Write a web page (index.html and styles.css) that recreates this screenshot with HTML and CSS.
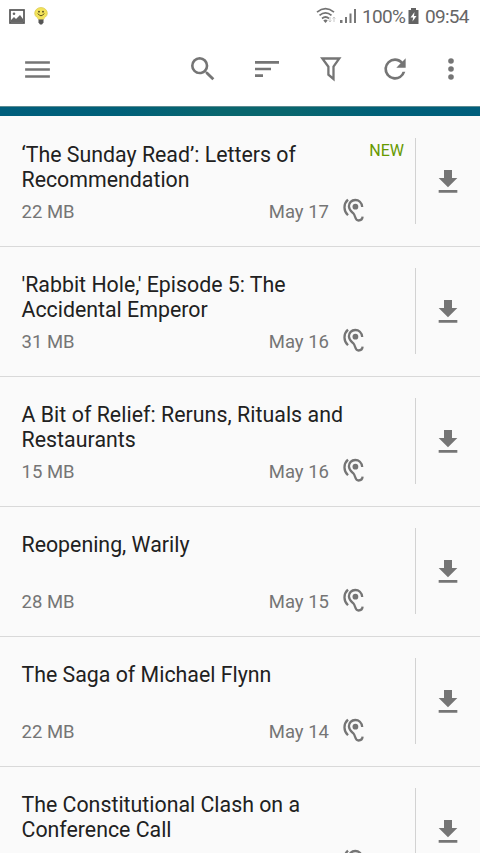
FILE: index.html
```html
<!DOCTYPE html>
<html lang="en">
<head>
<meta charset="utf-8">
<title>Episodes</title>
<link rel="stylesheet" href="styles.css">
</head>
<body>
<svg class="defs" aria-hidden="true">
  <symbol id="ear" viewBox="0 0 22 25">
    <path d="M5 1.700C.3 6 .3 12.700 5 17.300M19.200 9C18.800 4.800 15.800 2 12.300 2C8.400 2 5.900 5 5.900 8.300C5.900 12 8.500 13.600 10.500 15.500C12.600 17.700 11.800 22.500 15.500 22.500C18 22.500 19.400 21 19.600 18.700" fill="none" stroke="#757575" stroke-width="2.300"/>
    <circle cx="12.400" cy="8.700" r="2.900" fill="#757575"/>
  </symbol>
  <symbol id="download" viewBox="0 0 24 24"><path d="M19 9h-4V3H9v6H5l7 7 7-7zM5 18v2h14v-2H5z" fill="#757575"/></symbol>
</svg>
<div class="screen">
  <header class="status">
    <svg class="photo" viewBox="0 0 16 15"><rect x="1" y="1" width="14" height="13" fill="none" stroke="#555" stroke-width="1.700"/><path d="M2 11l3-3 2 2 4-4 3 4v3H2z" fill="#666"/><circle cx="5" cy="4.700" r="1.300" fill="#666"/></svg>
    <svg class="bulb" viewBox="0 0 14 18"><path d="M4.500 12.500C4.500 10.500.7 10 .7 6.300A6.300 5.800 0 0 1 13.300 6.300C13.300 10 9.500 10.500 9.500 12.500z" fill="#f3e35a" stroke="#d8c548" stroke-width=".7"/><path d="M3.800 6.500Q7 11 10.200 6.500" fill="none" stroke="#5b501c" stroke-width="1"/><circle cx="5" cy="4.700" r=".9" fill="#4b431c"/><circle cx="9" cy="4.700" r=".9" fill="#4b431c"/><path d="M4.500 12.500h5v3L8 17.500H6L4.500 15.500z" fill="#555"/></svg>
    <svg class="signals" viewBox="0 0 42 18"><g fill="none" stroke="#737373" stroke-width="1.700"><path d="M1 5.200Q9.500-1.800 18 5.200M3.500 8.400Q9.500 3.300 15.500 8.400M6 11.500Q9.500 8.500 13 11.500"/></g><path d="M7.300 13.500Q9.500 11.500 11.700 13.500L9.500 16z" fill="#737373"/><path d="M14 10v5m-1.300-1.500L14 15l1.300-1.500M18 15v-5m-1.300 1.500L18 10l1.300 1.500" fill="none" stroke="#c8c8c8"/><path d="M24 16v-3h2.500v3zM29 16v-6h2v6zM33.500 16V6.500h2V16zM38 16V2h2v14z" fill="#777"/></svg>
    <span class="percent">100%</span>
    <svg class="battery" viewBox="0 0 11 16"><path d="M3 0h5v2h2.500v14H.5V2H3z" fill="#636363"/><path d="M6.500 4L2.500 9.500h2.600L4.500 13.500l4-5.500H6z" fill="#fff"/></svg>
    <span class="clock">09:54</span>
  </header>
  <nav class="toolbar">
    <svg class="menu" viewBox="0 0 24 24"><path d="M3 18h18v-1.900H3zM3 12.900h18V11H3zM3 6v1.900h18V6z"/></svg>
    <svg class="search" viewBox="0 0 24 24"><path d="M15.500 14h-.79l-.28-.27A6.471 6.471 0 0 0 16 9.500 6.500 6.500 0 1 0 9.500 16c1.610 0 3.090-.59 4.230-1.570l.27.28v.79l5 4.990L20.490 19l-4.990-5zm-6 0C7.010 14 5 11.990 5 9.500S7.010 5 9.500 5 14 7.010 14 9.500 11.990 14 9.500 14z"/></svg>
    <svg class="sort" viewBox="0 0 24 24"><path d="M3 18h6v-2H3v2zM3 6v2h18V6H3zm0 7h12v-2H3v2z"/></svg>
    <svg class="filter" viewBox="0 0 22 25"><path d="M2.300 1.500H19.300L13.500 9.700V22L8.400 17.700V9.700z" fill="none" stroke="#757575" stroke-width="2.300"/></svg>
    <svg class="refresh" viewBox="0 0 24 24"><path d="M17.650 6.350A7.958 7.958 0 0 0 12 4a8 8 0 1 0 7.730 10h-2.080A5.990 5.990 0 0 1 12 18a6 6 0 1 1 0-12c1.660 0 3.140.69 4.220 1.780L13 11h7V4l-2.350 2.350z"/></svg>
    <svg class="more" viewBox="0 0 6 24"><circle cx="3" cy="4" r="2.800"/><circle cx="3" cy="12" r="2.800"/><circle cx="3" cy="20" r="2.800"/></svg>
  </nav>
  <div class="banner"></div>
  <main class="list">
    <article class="row">
      <div class="info"><div class="head"><h2>‘The Sunday Read’: Letters of<br>Recommendation</h2><span class="new">NEW</span></div><div class="meta"><span>22 MB</span><time>May 17</time><svg class="ear"><use href="#ear"/></svg></div></div>
      <div class="action"><svg><use href="#download"/></svg></div>
    </article>
    <article class="row">
      <div class="info"><div class="head"><h2>'Rabbit Hole,' Episode 5: The<br>Accidental Emperor</h2></div><div class="meta"><span>31 MB</span><time>May 16</time><svg class="ear"><use href="#ear"/></svg></div></div>
      <div class="action"><svg><use href="#download"/></svg></div>
    </article>
    <article class="row">
      <div class="info"><div class="head"><h2 class="wide">A Bit of Relief: Reruns, Rituals and<br>Restaurants</h2></div><div class="meta"><span>15 MB</span><time>May 16</time><svg class="ear"><use href="#ear"/></svg></div></div>
      <div class="action"><svg><use href="#download"/></svg></div>
    </article>
    <article class="row">
      <div class="info"><div class="head"><h2>Reopening, Warily</h2></div><div class="meta"><span>28 MB</span><time>May 15</time><svg class="ear"><use href="#ear"/></svg></div></div>
      <div class="action"><svg><use href="#download"/></svg></div>
    </article>
    <article class="row">
      <div class="info"><div class="head"><h2>The Saga of Michael Flynn</h2></div><div class="meta"><span>22 MB</span><time>May 14</time><svg class="ear"><use href="#ear"/></svg></div></div>
      <div class="action"><svg><use href="#download"/></svg></div>
    </article>
    <article class="row">
      <div class="info"><div class="head"><h2>The Constitutional Clash on a<br>Conference Call</h2></div><div class="meta"><svg class="ear"><use href="#ear"/></svg></div></div>
      <div class="action"><svg><use href="#download"/></svg></div>
    </article>
  </main>
</div>
</body>
</html>
```
FILE: styles.css
```css
* { box-sizing: border-box; }
body { margin: 0; font-family: Roboto, sans-serif; background: #fafafa; }
svg { display: block; flex: none; }
.defs { display: none; }
.screen { height: 853px; overflow: hidden; }
.status { height: 32px; display: flex; align-items: center; background: #fff; color: #666; font-size: 19px; letter-spacing: -0.700px; white-space: nowrap; }
.photo { width: 16px; height: 15px; margin-left: 9px; }
.bulb { width: 14px; height: 18px; margin-left: 9px; }
.signals { width: 42px; height: 18px; margin-left: 268px; }
.percent { width: 43px; margin-left: 4px; }
.battery { width: 11px; height: 16px; margin-left: 3px; }
.clock { margin-left: 6px; }
.toolbar { height: 74px; display: flex; align-items: flex-start; background: #fff; padding-top: 21px; fill: #757575; }
.toolbar svg { width: 32px; height: 32px; }
.toolbar .menu { width: 33px; height: 33px; margin-left: 20.500px; }
.toolbar .search { margin-left: 133px; }
.toolbar .sort { margin-left: 32px; }
.toolbar .filter { width: 22px; height: 25px; margin: 4px 0 0 37px; }
.toolbar .refresh { margin-left: 37px; }
.toolbar .more { width: 6px; height: 24px; margin: 4px 0 0 37px; }
.banner { height: 10px; background: linear-gradient(90deg, #005e7c 0%, #006079 25%, #09666e 46%, #09666e 60%, #006079 80%, #005e7c 100%); border-top: 1px solid #5c8b91; }
.row { height: 130px; display: flex; border-bottom: 1px solid #d9d9d9; padding: 22px 0; }
.row:first-child { height: 131px; padding-top: 22px; }
.row + .row { padding-top: 21px; }
.info { width: 415px; padding-left: 21.500px; display: flex; flex-direction: column; }
.head { height: 61px; padding-top: 4px; display: flex; justify-content: space-between; }
h2 { margin: 0; font-size: 21.330px; line-height: 25px; font-weight: 400; color: #212121; white-space: nowrap; }
.wide { letter-spacing: 0.040px; }
.new { font-size: 16px; line-height: 19px; color: #669900; margin: -1px 11px 0 0; }
.meta { display: flex; align-items: flex-start; height: 26px; line-height: 28px; color: #757575; font-size: 18.500px; }
.meta time { margin-left: auto; }
.ear { width: 22px; height: 25px; margin: 0.400px 50px 0 14px; }
.meta .ear:only-child { margin-left: auto; }
.action { height: 86px; width: 65px; border-left: 1px solid #d2d2d2; display: flex; align-items: center; justify-content: center; padding-top: 1.500px; }
.action svg { width: 32px; height: 32px; }
```
